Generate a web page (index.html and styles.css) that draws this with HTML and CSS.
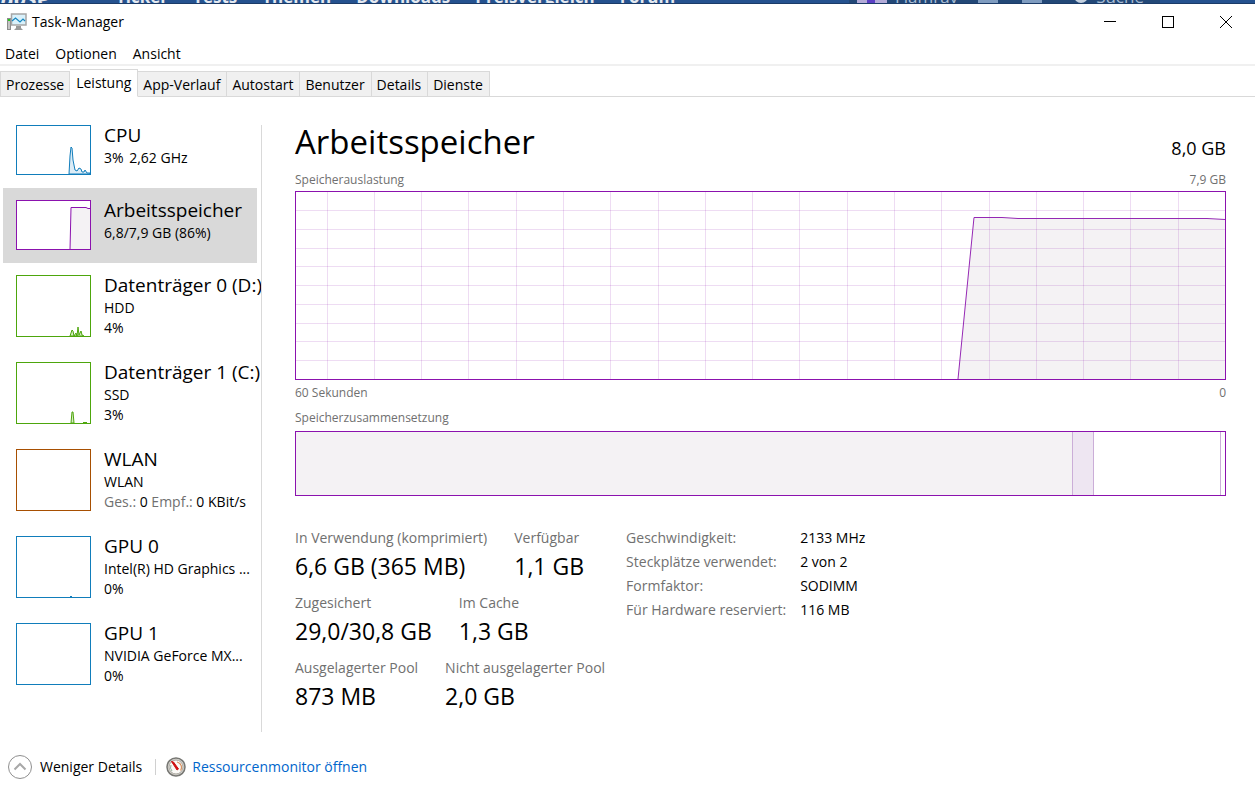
FILE: index.html
```html
<!DOCTYPE html>
<html lang="de">

<head>
    <meta charset="UTF-8">
    <meta name="viewport" content="width=device-width, initial-scale=1.0">
    <title>Task-Manager</title>
    <link rel="stylesheet" href="styles.css">
</head>

<body>
    <!-- website behind the window, only its lower edge is visible -->
    <div class="backdrop">
        <span class="backdrop-brand">Base</span>
        <nav class="backdrop-nav">
            <span>Ticker</span>
            <span>Tests</span>
            <span>Themen</span>
            <span>Downloads</span>
            <span>Preisvergleich</span>
            <span>Forum</span>
        </nav>
        <div class="backdrop-user">
            <span class="avatar"></span>
            <span class="user-name">Flamray</span>
            <span class="mail"></span>
            <span class="bell"></span>
            <span class="search-icon"></span>
            <span>Suche</span>
        </div>
    </div>

    <header class="titlebar">
        <svg class="app-icon" width="20" height="18" viewBox="0 0 20 18">
            <rect x="0.5" y="5.5" width="3" height="11" fill="#c4c4c4" stroke="#8c8c8c" />
            <rect x="1" y="6" width="2" height="2" fill="#27c61d" />
            <rect x="4.500" y="1" width="14.500" height="11" fill="#d9f1fb" stroke="#a5a5a5" stroke-width="1.5" />
            <path d="M5 8 L8.500 5 L13 9 L16 6 L18 8" fill="none" stroke="#1787c0" stroke-width="1.2" />
            <path d="M9 13 h5 v2 l2 2 H7 l2 -2 z" fill="#999" />
        </svg>
        <h1>Task-Manager</h1>
        <div class="window-buttons">
            <button type="button" aria-label="Minimieren"><svg width="12" height="12"><path d="M0 5.500 H12" /></svg></button>
            <button type="button" aria-label="Maximieren"><svg width="12" height="12"><rect x="0.5" y="0.5" width="11" height="11" /></svg></button>
            <button type="button" aria-label="Schließen"><svg width="12" height="12"><path d="M0 0 L12 12 M12 0 L0 12" /></svg></button>
        </div>
    </header>

    <nav class="menubar">
        <button type="button">Datei</button>
        <button type="button">Optionen</button>
        <button type="button">Ansicht</button>
    </nav>

    <div class="tabs" role="tablist">
        <button type="button" role="tab">Prozesse</button>
        <button type="button" role="tab" class="active" aria-selected="true">Leistung</button>
        <button type="button" role="tab">App-Verlauf</button>
        <button type="button" role="tab">Autostart</button>
        <button type="button" role="tab">Benutzer</button>
        <button type="button" role="tab">Details</button>
        <button type="button" role="tab">Dienste</button>
    </div>

    <main>
        <div class="sidebar">
            <button type="button" class="item">
                <svg class="thumb short cpu" viewBox="0 0 73 48">
                    <path d="M52 48 L53 30 L54 21 L55 22 L56 34 L58 44 L60 45 L62 42 L64 43 L65 46 L67 46 L68 44 L70 47 L73 47 L73 48 Z" />
                </svg>
                <span class="item-text">
                    <span class="item-title">CPU</span>
                    <span class="item-line"><span>3%</span> <span class="speed">2,62 GHz</span></span>
                </span>
            </button>
            <button type="button" class="item selected">
                <svg class="thumb short memory" viewBox="0 0 73 48">
                    <path d="M53 49 L54 6.500 L69 6.500 L71 7.500 L74 7.500 V49 Z" />
                </svg>
                <span class="item-text">
                    <span class="item-title">Arbeitsspeicher</span>
                    <span class="item-line">6,8/7,9 GB (86%)</span>
                </span>
            </button>
            <button type="button" class="item">
                <svg class="thumb disk" viewBox="0 0 73 60">
                    <path d="M53 60 L55 54 L56 55 L57 60 L59 57 L60 60 L61 51 L62 59 L64 55 L65 59 L67 60 Z" />
                </svg>
                <span class="item-text">
                    <span class="item-title">Datenträger 0 (D:)</span>
                    <span class="item-line">HDD</span>
                    <span class="item-line">4%</span>
                </span>
            </button>
            <button type="button" class="item">
                <svg class="thumb disk" viewBox="0 0 73 60">
                    <path d="M54 60 L55 49 L56 49 L57 60 Z M66 60 L67 59 L68 60 L69 59 L70 60" />
                </svg>
                <span class="item-text">
                    <span class="item-title">Datenträger 1 (C:)</span>
                    <span class="item-line">SSD</span>
                    <span class="item-line">3%</span>
                </span>
            </button>
            <button type="button" class="item">
                <svg class="thumb network" viewBox="0 0 73 60"></svg>
                <span class="item-text">
                    <span class="item-title">WLAN</span>
                    <span class="item-line">WLAN</span>
                    <span class="item-line"><span class="muted">Ges.:</span> 0 <span class="muted">Empf.:</span> 0 KBit/s</span>
                </span>
            </button>
            <button type="button" class="item">
                <svg class="thumb cpu" viewBox="0 0 73 60">
                    <path d="M53 60 L54 59 L55 60" />
                </svg>
                <span class="item-text">
                    <span class="item-title">GPU 0</span>
                    <span class="item-line">Intel(R) HD Graphics ...</span>
                    <span class="item-line">0%</span>
                </span>
            </button>
            <button type="button" class="item">
                <svg class="thumb cpu" viewBox="0 0 73 60"></svg>
                <span class="item-text">
                    <span class="item-title">GPU 1</span>
                    <span class="item-line">NVIDIA GeForce MX...</span>
                    <span class="item-line">0%</span>
                </span>
            </button>
        </div>
        <div class="divider"></div>

        <section class="details">
            <div class="heading">
                <h2>Arbeitsspeicher</h2>
                <span class="total">8,0 GB</span>
            </div>

            <div class="caption"><span>Speicherauslastung</span><span>7,9 GB</span></div>
            <svg class="graph" viewBox="0 0 929 187" preserveAspectRatio="none">
                <path class="area" d="M662 187 L678 26 L706 26 L722 27 L911 27 L929 28 V187 Z" />
                <path class="grid" d="M31.500 0V187 M78.500 0V187 M125.500 0V187 M172.500 0V187 M220.500 0V187 M267.500 0V187 M314.500 0V187 M362.500 0V187 M409.500 0V187 M456.500 0V187 M503.500 0V187 M551.500 0V187 M598.500 0V187 M645.500 0V187 M693.500 0V187 M740.500 0V187 M787.500 0V187 M834.500 0V187 M882.500 0V187" />
                <path class="grid" d="M0 18.500H929 M0 37.500H929 M0 56.500H929 M0 74.500H929 M0 93.500H929 M0 112.500H929 M0 131.500H929 M0 149.500H929 M0 168.500H929" />
                <path class="line" d="M662 187 L678 25.500 L706 25.500 L722 26.500 L911 26.500 L929 27.500" />
            </svg>
            <div class="caption time-axis"><span>60 Sekunden</span><span>0</span></div>

            <div class="caption composition-caption"><span>Speicherzusammensetzung</span></div>
            <div class="composition">
                <span class="used"></span>
                <span class="modified"></span>
                <span class="standby"></span>
                <span class="free"></span>
            </div>

            <div class="facts">
                <div class="stats">
                    <dl>
                        <div><dt>In Verwendung (komprimiert)</dt><dd>6,6 GB (365 MB)</dd></div>
                        <div><dt>Verfügbar</dt><dd>1,1 GB</dd></div>
                    </dl>
                    <dl>
                        <div><dt>Zugesichert</dt><dd>29,0/30,8 GB</dd></div>
                        <div><dt>Im Cache</dt><dd>1,3 GB</dd></div>
                    </dl>
                    <dl>
                        <div><dt>Ausgelagerter Pool</dt><dd>873 MB</dd></div>
                        <div><dt>Nicht ausgelagerter Pool</dt><dd>2,0 GB</dd></div>
                    </dl>
                </div>
                <table class="hardware">
                    <tr><th scope="row">Geschwindigkeit:</th><td>2133 MHz</td></tr>
                    <tr><th scope="row">Steckplätze verwendet:</th><td>2 von 2</td></tr>
                    <tr><th scope="row">Formfaktor:</th><td>SODIMM</td></tr>
                    <tr><th scope="row">Für Hardware reserviert:</th><td>116 MB</td></tr>
                </table>
            </div>
        </section>
    </main>

    <footer>
        <button type="button" class="less">
            <svg width="24" height="24" viewBox="0 0 24 24" fill="none">
                <circle cx="12" cy="12" r="11.5" stroke="#8f8f8f" />
                <path d="M6.500 14.500 L12 9 L17.500 14.500" stroke="#a8a8a8" stroke-width="2" />
            </svg>
            Weniger Details
        </button>
        <span class="separator"></span>
        <a href="#" class="monitor">
            <svg width="20" height="20" viewBox="0 0 20 20" fill="none">
                <circle cx="10" cy="10" r="9" fill="#d9d7d2" stroke="#777773" stroke-width="1.5" />
                <circle cx="10" cy="10" r="7" fill="#fbfaf7" stroke="#aaa79f" />
                <path d="M6 14 A5.500 5.500 0 0 1 5 8" stroke="#8fae9b" />
                <path d="M11 5 A5.500 5.500 0 0 1 14.500 13.500" stroke="#d78f5d" stroke-width="1.2" />
                <path d="M5.500 4.500 L7.500 5 L12.500 12 L11 13 Z" fill="#cf1010" stroke="#cf1010" />
            </svg>
            <span>Ressourcenmonitor öffnen</span>
        </a>
    </footer>
</body>

</html>
```
FILE: styles.css
```css
* {
    box-sizing: border-box;
}

body {
    display: flex;
    flex-direction: column;
    min-height: 100vh;
    margin: 0;
    background-color: #fff;
    color: #000;
    font-family: "Segoe UI", "Open Sans", "Noto Sans", sans-serif;
    font-size: 14px;
    line-height: 20px;
}

button {
    padding: 0;
    border: 0;
    background: none;
    color: inherit;
    font: inherit;
    text-align: left;
    white-space: nowrap;
}

h1,
h2,
dl,
dd {
    margin: 0;
    font-weight: normal;
}

/* backdrop */
.backdrop {
    display: flex;
    align-items: flex-end;
    height: 4px;
    border-bottom: 1px solid #1b3b68;
    background-color: #25528f;
    color: #e4e9f0;
    font-size: 17px;
    font-weight: bold;
    line-height: 12px;
    overflow: hidden;
}

.backdrop-brand {
    width: 116px;
    font-size: 22px;
    font-style: italic;
}

.backdrop-nav {
    display: flex;
    gap: 25px;
}

.backdrop-user {
    display: flex;
    align-items: flex-end;
    gap: 8px;
    margin: 0 95px 0 auto;
    padding: 0 16px 0 8px;
    background-color: #234877;
    color: #a9bdd4;
    font-weight: normal;
}

.avatar {
    width: 30px;
    height: 12px;
    border-right: 12px solid #b3abd8;
    border-left: 10px solid #b3abd8;
    background-color: #5b3fc4;
}

.mail,
.bell {
    width: 20px;
    height: 12px;
    margin-left: 12px;
    background-color: #7f9cc0;
}

.bell {
    margin-right: 24px;
    margin-left: 16px;
    border-radius: 8px 8px 0 0;
}

.search-icon {
    width: 14px;
    height: 12px;
    border-radius: 0 0 8px 8px;
    background-color: #c3d0df;
}

/* window frame */
.titlebar {
    display: flex;
    align-items: center;
    height: 36px;
    padding-left: 7px;
}

.titlebar h1 {
    margin-left: 5px;
    font-size: 14px;
}

.window-buttons {
    display: flex;
    align-self: stretch;
    margin-left: auto;
}

.window-buttons button {
    display: flex;
    align-items: center;
    justify-content: center;
    width: 58px;
}

.window-buttons svg {
    fill: none;
    stroke: #000;
}

.menubar {
    display: flex;
    gap: 16px;
    height: 26px;
    padding: 4px 5px 0;
    border-bottom: 2px solid #f0f0f0;
}

.tabs {
    display: flex;
    align-items: flex-end;
    height: 31px;
    border-bottom: 1px solid #d9d9d9;
}

.tabs button {
    height: 26px;
    margin-bottom: -1px;
    padding: 2px 5px 0;
    border: 1px solid #d9d9d9;
    border-left-width: 0;
    background-color: #f0f0f0;
}

.tabs button:first-child {
    border-left-width: 1px;
}

.tabs .active {
    height: 28px;
    padding: 0 6px 1px;
    border-bottom-color: #fff;
    background-color: #fff;
}

.tabs .active ~ button {
    padding-right: 6px;
}

/* content */
main {
    display: flex;
    flex: 1;
}

.sidebar {
    width: 258px;
    padding: 16px 1px 0 3px;
}

.item {
    display: flex;
    gap: 13px;
    width: 100%;
    padding: 12px 0 13px 13px;
}

.item.selected {
    background-color: #d9d9d9;
}

.thumb {
    flex: none;
    width: 75px;
    height: 62px;
    border: 1px solid;
    background-color: #fff;
    stroke: currentColor;
}

.thumb.short {
    height: 50px;
}

.cpu {
    color: #117dbb;
    fill: #dcecf6;
}

.memory {
    color: #8b12ae;
    fill: #f4f2f4;
}

.disk {
    color: #4da60c;
    fill: #d5ebc3;
}

.network {
    color: #a74f01;
}

.item-text {
    display: flex;
    flex-direction: column;
    height: 50px;
}

.item-title {
    margin-bottom: 3px;
    font-size: 19px;
    line-height: 20px;
}

.speed {
    margin-left: 2px;
}

.muted {
    color: #707070;
}

.divider {
    width: 1px;
    margin: 28px 0 6px 3px;
    background-color: #d9d9d9;
}

.details {
    flex: 1;
    padding: 24px 29px 0 33px;
}

.heading {
    display: flex;
    align-items: flex-start;
    justify-content: space-between;
    height: 48px;
}

.heading h2 {
    font-size: 33px;
    line-height: 42px;
}

.total {
    align-self: flex-end;
    font-size: 18px;
    line-height: 42px;
}

.caption {
    display: flex;
    justify-content: space-between;
    height: 22px;
    color: #707070;
    font-size: 12px;
    line-height: 22px;
}

.graph {
    display: block;
    width: 100%;
    height: 189px;
    border: 1px solid #8b12ae;
    fill: none;
}

.graph path {
    vector-effect: non-scaling-stroke;
}

.area {
    fill: #f4f2f4;
}

.grid {
    stroke: #8b12ae;
    stroke-opacity: 0.15;
}

.line {
    stroke: #9528b4;
}

.time-axis {
    height: 26px;
    line-height: 26px;
}

.composition-caption {
    margin: 1px 0 2px;
}

.composition {
    display: grid;
    grid-template-columns: 777fr 21fr 127fr 4fr;
    height: 65px;
    border: 1px solid #8b12ae;
}

.composition span {
    border-right: 1px solid #cbaed8;
}

.composition .used {
    background-color: #f4f2f4;
}

.composition .modified {
    background-color: #eee6f2;
}

.composition .free {
    border: 0;
}

.facts {
    display: flex;
    gap: 21px;
    padding-top: 30px;
}

.stats dl {
    display: flex;
    gap: 27px;
    height: 65px;
    white-space: nowrap;
}

dt {
    color: #707070;
    line-height: 24px;
}

dd {
    font-size: 23px;
    line-height: 32px;
}

.hardware {
    align-self: flex-start;
    border-collapse: collapse;
    line-height: 24px;
    white-space: nowrap;
}

.hardware th {
    padding: 0 14px 0 0;
    color: #707070;
    font-weight: normal;
    text-align: left;
}

.hardware td {
    padding: 0;
}

/* bottom bar */
footer {
    display: flex;
    align-items: center;
    height: 58px;
    padding: 0 8px;
}

.less,
.monitor {
    display: flex;
    align-items: center;
    gap: 8px;
}

.separator {
    width: 1px;
    height: 16px;
    margin: 0 10px 0 13px;
    background-color: #d0d0d0;
}

.monitor {
    gap: 6px;
    color: #0066cc;
    text-decoration: none;
}
```
